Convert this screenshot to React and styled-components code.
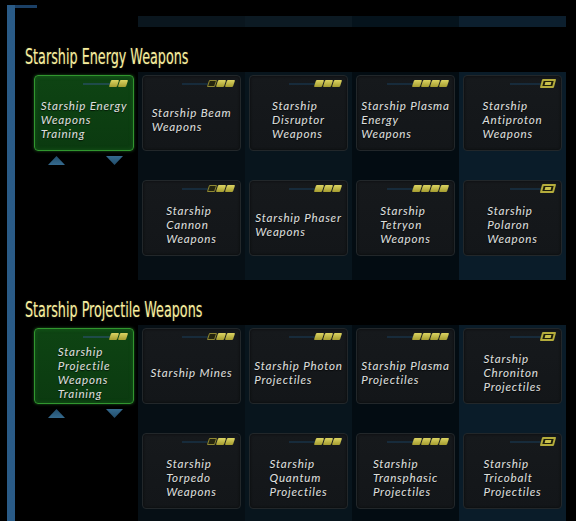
import React from "react";
import styled, { createGlobalStyle } from "styled-components";

const GlobalStyle = createGlobalStyle`
  html, body {
    margin: 0;
    padding: 0;
    background: #000;
  }
  body {
    width: 576px;
    height: 521px;
    overflow: hidden;
    font-family: "Lato", sans-serif;
  }
`;

const Page = styled.div`
  height: 521px;
  padding: 5px 0 0 7px;
  box-sizing: border-box;
  background: #000;
`;

const Frame = styled.div`
  height: 100%;
  box-sizing: border-box;
  padding-top: 11px;
  border-left: 8px solid #183b5c;
  border-image: linear-gradient(to right, #2a5b87, #1a3e60 35%, #14324f) 1;
  background: linear-gradient(#1b4066, #1b4066) no-repeat 0 0 / 22px 3px;
`;

const Band = styled.div`
  margin-left: 123px;
  width: 428px;
  height: 11px;
  display: grid;
  grid-template-columns: repeat(4, 1fr);
`;

const BandCell = styled.div`
  background: ${(p) => p.$tone};
`;

const SectionTitle = styled.h2`
  margin: 0;
  height: 45px;
  box-sizing: border-box;
  padding: ${(p) => p.$top}px 0 0 10px;
  font-weight: normal;
  white-space: nowrap;
`;

const TitleText = styled.span`
  display: inline-block;
  font-family: "DejaVu Sans Condensed", "DejaVu Sans", sans-serif;
  font-size: 22px;
  line-height: 22px;
  color: #f7ee9e;
  transform: scaleX(0.645);
  transform-origin: left center;
  text-shadow: 0 0 2px rgba(247, 238, 158, 0.3);
`;

const Grid = styled.div`
  margin-left: 15px;
  display: grid;
  grid-template-columns: 108px repeat(4, 107px);
  grid-template-rows: 105px ${(p) => p.$last}px;
`;

const ColumnBg = styled.div`
  grid-column: ${(p) => p.$col};
  grid-row: 1 / -1;
  background: ${(p) => p.$tone};
`;

const Slot = styled.div`
  grid-column: ${(p) => p.$col};
  grid-row: ${(p) => p.$row};
  display: flex;
  flex-direction: column;
  align-items: center;
`;

const Card = styled.div`
  width: ${(p) => (p.$green ? 100 : 99)}px;
  height: 76px;
  margin-top: 3px;
  box-sizing: border-box;
  border-radius: 4px;
  border: 1px solid ${(p) => (p.$green ? "#31962f" : "#22272a")};
  background: ${(p) =>
    p.$green
      ? "linear-gradient(#0e4413, #0b3a10)"
      : "linear-gradient(#16191c, #131619)"};
  box-shadow: ${(p) =>
    p.$green
      ? "0 0 3px rgba(60, 180, 60, 0.5), inset 0 0 4px rgba(40, 140, 40, 0.35)"
      : "inset 0 0 3px rgba(0, 0, 0, 0.6)"};
  display: flex;
  flex-direction: column;
`;

const RankRow = styled.div`
  height: 13px;
  display: flex;
  justify-content: flex-end;
  align-items: center;
  padding: 1px 6px 0 0;
`;

const Track = styled.div`
  width: ${(p) => p.$w}px;
  height: 2px;
  background: ${(p) => (p.$green ? "#1f4b4a" : "#172b3b")};
`;

const Pips = styled.div`
  display: flex;
  gap: 1px;
`;

const Pip = styled.div`
  width: 8px;
  height: 7px;
  box-sizing: border-box;
  transform: skewX(-18deg);
  border-radius: 1px;
  background: ${(p) =>
    p.$hollow ? "#25250f" : "linear-gradient(#dcd462, #a49c30)"};
  border: ${(p) => (p.$hollow ? "1px solid #8f8832" : "none")};
`;

const Badge = styled.div`
  width: 14px;
  height: 9px;
  box-sizing: border-box;
  transform: skewX(-15deg);
  border: 2px solid #b4ac3c;
  border-radius: 1px;
  background: #1f1f0c;
  display: flex;
  align-items: center;
  justify-content: center;
`;

const BadgeCore = styled.div`
  width: 6px;
  height: 3px;
  background: #c9c14c;
`;

const CardBody = styled.div`
  flex: 1;
  display: flex;
  align-items: center;
  justify-content: center;
  padding-bottom: 1px;
`;

const CardText = styled.div`
  font-family: "Lato", sans-serif;
  font-style: italic;
  font-size: 11.6px;
  line-height: 14px;
  letter-spacing: 0.8px;
  color: #dcdedc;
  -webkit-text-stroke: 0.08px #dcdedc;
  text-align: left;
  white-space: nowrap;
  text-shadow: 0 1px 1px rgba(0, 0, 0, 0.7);
`;

const ArrowRow = styled.div`
  width: 100px;
  display: flex;
  justify-content: space-between;
  padding: 5px 11px 0 14px;
  box-sizing: border-box;
`;

const tones = ["#060f15", "#08151d", "#030c12", "#0a1c29"];
const bandTones = ["#0a161e", "#0c1a23", "#05131c", "#0c1f2e"];

const sections = [
  {
    title: "Starship Energy Weapons",
    top: 13,
    last: 103,
    training: ["Starship Energy", "Weapons", "Training"],
    skills: [
      { lines: ["Starship Beam", "Weapons"], rank: "h2" },
      { lines: ["Starship", "Disruptor", "Weapons"], rank: "3" },
      { lines: ["Starship Plasma", "Energy", "Weapons"], rank: "4" },
      { lines: ["Starship", "Antiproton", "Weapons"], rank: "b" },
      { lines: ["Starship", "Cannon", "Weapons"], rank: "h2" },
      { lines: ["Starship Phaser", "Weapons"], rank: "3" },
      { lines: ["Starship", "Tetryon", "Weapons"], rank: "4" },
      { lines: ["Starship", "Polaron", "Weapons"], rank: "b" },
    ],
  },
  {
    title: "Starship Projectile Weapons",
    top: 13,
    last: 91,
    training: ["Starship", "Projectile", "Weapons", "Training"],
    skills: [
      { lines: ["Starship Mines"], rank: "h2" },
      { lines: ["Starship Photon", "Projectiles"], rank: "3" },
      { lines: ["Starship Plasma", "Projectiles"], rank: "4" },
      { lines: ["Starship", "Chroniton", "Projectiles"], rank: "b" },
      { lines: ["Starship", "Torpedo", "Weapons"], rank: "h2" },
      { lines: ["Starship", "Quantum", "Projectiles"], rank: "3" },
      { lines: ["Starship", "Transphasic", "Projectiles"], rank: "4" },
      { lines: ["Starship", "Tricobalt", "Projectiles"], rank: "b" },
    ],
  },
];

function Rank({ kind, green }) {
  if (kind === "b") {
    return (
      <RankRow>
        <Track $w={31} />
        <Badge>
          <BadgeCore />
        </Badge>
      </RankRow>
    );
  }
  let pips = [];
  if (kind === "h2") pips = [true, false, false];
  else pips = Array.from({ length: Number(kind) }, () => false);
  return (
    <RankRow>
      <Track $w={green ? 27 : 26} $green={green} />
      <Pips>
        {pips.map((hollow, i) => (
          <Pip key={i} $hollow={hollow} />
        ))}
      </Pips>
    </RankRow>
  );
}

function Lines({ lines }) {
  return (
    <CardBody>
      <CardText>
        {lines.map((l, i) => (
          <div key={i}>{l}</div>
        ))}
      </CardText>
    </CardBody>
  );
}

function Arrow({ down }) {
  return (
    <svg width="17" height="9" viewBox="0 0 17 9">
      <defs>
        <linearGradient id={down ? "ad" : "au"} x1="0" y1="0" x2="0" y2="1">
          <stop offset="0" stopColor={down ? "#356a8e" : "#224d6b"} />
          <stop offset="1" stopColor={down ? "#224d6b" : "#356a8e"} />
        </linearGradient>
      </defs>
      <polygon
        points={down ? "0,0 17,0 8.5,9" : "8.5,0 17,9 0,9"}
        fill={`url(#${down ? "ad" : "au"})`}
      />
    </svg>
  );
}

function Section({ data }) {
  return (
    <>
      <SectionTitle $top={data.top}>
        <TitleText>{data.title}</TitleText>
      </SectionTitle>
      <Grid $last={data.last}>
        {tones.map((t, i) => (
          <ColumnBg key={i} $col={i + 2} $tone={t} />
        ))}
        <Slot $col={1} $row={1}>
          <Card $green>
            <Rank kind="2" green />
            <Lines lines={data.training} />
          </Card>
          <ArrowRow>
            <Arrow />
            <Arrow down />
          </ArrowRow>
        </Slot>
        {data.skills.map((s, i) => (
          <Slot key={i} $col={(i % 4) + 2} $row={Math.floor(i / 4) + 1}>
            <Card>
              <Rank kind={s.rank} />
              <Lines lines={s.lines} />
            </Card>
          </Slot>
        ))}
      </Grid>
    </>
  );
}

export default function App() {
  return (
    <>
      <GlobalStyle />
      <Page>
        <Frame>
          <Band>
            {bandTones.map((t, i) => (
              <BandCell key={i} $tone={t} />
            ))}
          </Band>
          {sections.map((s, i) => (
            <Section key={i} data={s} />
          ))}
        </Frame>
      </Page>
    </>
  );
}
